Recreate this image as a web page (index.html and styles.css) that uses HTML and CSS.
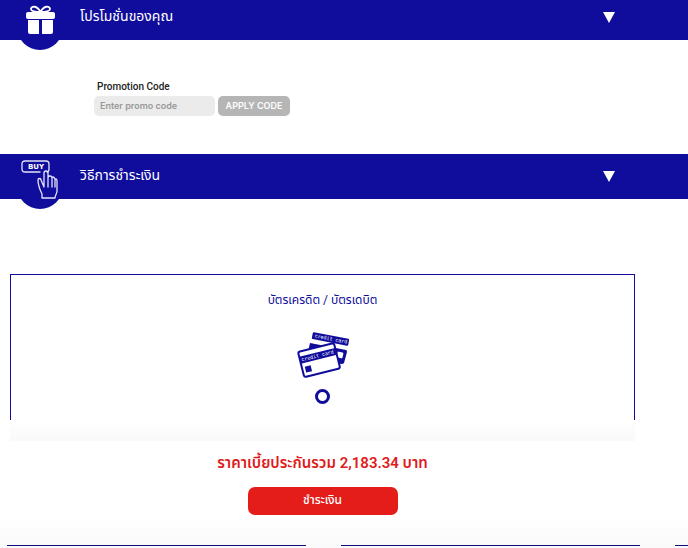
FILE: index.html
```html
<!DOCTYPE html>
<html lang="th">
<head>
  <meta charset="UTF-8">
  <meta name="viewport" content="width=device-width, initial-scale=1.0">
  <title>ชำระเงิน</title>
  <link rel="stylesheet" href="styles.css">
</head>
<body>
  <header class="bar bar-promo">
    <span class="bar-icon">
      <svg width="40" height="46" viewBox="0 0 40 46" fill="#fff">
        <path d="M8 8h25q2 0 2 2v3q0 2-2 2H8q-2 0-2-2v-3q0-2 2-2z"/>
        <path d="M8 16h11v14h-9q-2 0-2-2zM22 16h11v12q0 2-2 2h-9z"/>
        <path d="M20.500 8C17 1 11 2 11 5c0 2 3 3 9.500 3S30 7 30 5c0-3-6-4-9.500 3z" fill="none" stroke="#fff" stroke-width="1.800"/>
      </svg>
    </span>
    <h2>โปรโมชั่นของคุณ</h2>
    <button class="toggle" type="button" aria-label="โปรโมชั่นของคุณ"></button>
  </header>

  <form class="promo">
    <label for="promo">Promotion Code</label>
    <div class="promo-row">
      <input type="text" id="promo" placeholder="Enter promo code">
      <button class="apply" type="button">APPLY CODE</button>
    </div>
  </form>

  <header class="bar bar-pay">
    <span class="bar-icon">
      <svg width="40" height="46" viewBox="0 0 40 46" fill="none" stroke="#e4e4fa" stroke-width="1.300" stroke-linejoin="round" stroke-linecap="round">
        <path d="M20 13H5q-3 0-3-3V5q0-3 3-3h21q3 0 3 3v5q0 3-2 3"/>
        <text class="buy" x="16" y="10" text-anchor="middle">BUY</text>
        <path d="M22 39v-4c-2-4-4-8-4-14 0-2 3-2 3 0l3 7V14q0-2 2-2t2 2v14-9q0-2 2-2t2 2v9-8q0-2 1-2t2 2v8-6q0-2 1-2t1 2v10c0 3-2 4-2 7z"/>
      </svg>
    </span>
    <h2>วิธีการชำระเงิน</h2>
    <button class="toggle" type="button" aria-label="วิธีการชำระเงิน"></button>
  </header>

  <main class="payment">
    <div class="method">
      <label for="card">บัตรเครดิต / บัตรเดบิต</label>
      <svg width="54" height="48" viewBox="0 0 54 48">
        <g transform="translate(17 1) rotate(11)">
          <rect width="37" height="7" rx="1" fill="#100d9c"/>
          <text class="card-text" x="19" y="5" text-anchor="middle">credit card</text>
        </g>
        <path d="M14 12l36 7q1 0 1 2l-3 11q-1 1-2 1l-8-1-4-16-22 5z" fill="#100d9c"/>
        <rect x="41" y="21" width="6" height="6" rx="1" fill="#fff" transform="rotate(12 44 24)"/>
        <g transform="translate(2 21) rotate(-14)">
          <rect width="37" height="26" rx="2" fill="#fff" stroke="#100d9c" stroke-width="2"/>
          <rect y="5" width="37" height="7" fill="#100d9c"/>
          <text class="card-text" x="18" y="10" text-anchor="middle">credit card</text>
          <rect x="3" y="16" width="6" height="6" fill="#100d9c"/>
        </g>
      </svg>
      <input type="radio" id="card" name="method">
    </div>
    <div class="method-end"></div>
    <p class="total">ราคาเบี้ยประกันรวม 2,183.34 บาท</p>
    <button class="pay" type="button">ชำระเงิน</button>
  </main>

  <div class="plans">
    <div class="plan"></div>
    <div class="plan"></div>
    <div class="plan"></div>
  </div>
</body>
</html>
```
FILE: styles.css
```css
* {
  box-sizing: border-box;
}
body {
  margin: 0;
  background: #fff;
  font-family: Roboto, "Noto Sans Thai", "Noto Sans", sans-serif;
  overflow-x: hidden;
}
.bar {
  display: flex;
  align-items: flex-start;
  height: 45px;
  padding: 0 73px 0 17px;
  background: #100d9c;
  color: #fff;
}
.bar-promo {
  height: 40px;
}
.bar-icon {
  width: 46px;
  height: 46px;
  border-radius: 50%;
  background: #100d9c;
  margin-top: 4px;
}
.bar-pay .bar-icon {
  margin-top: 9px;
}
.bar-icon svg {
  display: block;
  margin: 0 auto;
}
.bar-pay svg {
  margin-top: -4px;
}
.buy {
  font: bold 7px "DejaVu Sans", sans-serif;
  fill: #fff;
  stroke: none;
}
.bar h2 {
  flex: 1;
  margin: 4px 0 0 17px;
  font-size: 14px;
  font-weight: 400;
  line-height: 24px;
}
.bar-pay h2 {
  margin-top: 9px;
}
.toggle {
  width: 12px;
  height: 11px;
  margin-top: 12px;
  padding: 0;
  border: 0;
  background: #fff;
  clip-path: polygon(0 0, 100% 0, 50% 100%);
}
.bar-pay .toggle {
  margin-top: 17px;
}
.promo {
  padding: 40px 94px 38px;
}
.promo label {
  display: block;
  padding-left: 3px;
  font-size: 10px;
  font-weight: 500;
  line-height: 14px;
  color: #222;
  margin-bottom: 2px;
}
.promo-row {
  display: flex;
  gap: 3px;
}
.promo input,
.apply {
  height: 20px;
  border: 0;
  border-radius: 5px;
  font-family: Inter, sans-serif;
  font-size: 9px;
  font-weight: 600;
}
.promo input {
  width: 121px;
  padding: 0 6px 2px;
  background: #ebebeb;
}
.promo input::placeholder {
  color: #999;
}
.apply {
  width: 72px;
  padding: 0 0 2px;
  background: #b5b5b5;
  color: #fff;
}
.payment {
  margin: 75px 53px 0 10px;
  text-align: center;
}
.method {
  display: flex;
  flex-direction: column;
  align-items: center;
  height: 146px;
  padding-top: 15px;
  border: 1px solid #100d9c;
  border-bottom: 0;
}
.method label {
  font-size: 12px;
  line-height: 20px;
  color: #100d9c;
}
.method svg {
  margin-top: 21px;
}
.card-text {
  font: 5px "DejaVu Sans Mono", monospace;
  fill: #fff;
}
.method input {
  appearance: none;
  width: 15px;
  height: 15px;
  margin: 10px 0 0;
  border: 3px solid #100d9c;
  border-radius: 50%;
  flex-shrink: 0;
}
.method-end {
  height: 21px;
  background: linear-gradient(#fff, #f9f9f9);
}
.total {
  margin: 10px 0 12px;
  font-size: 15px;
  font-weight: 600;
  line-height: 24px;
  color: #e01b1b;
}
.pay {
  width: 150px;
  height: 28px;
  padding: 0 0 2px;
  border: 0;
  border-radius: 7px;
  background: #e41d1a;
  color: #fff;
  font-family: inherit;
  font-size: 12px;
  font-weight: 500;
}
.plans {
  display: grid;
  grid-template-columns: repeat(3, 299px);
  gap: 35px;
  padding: 30px 0 0 7px;
  overflow: hidden;
  background: linear-gradient(#fff, #fafafa);
}
.plan {
  height: 3px;
  border-top: 1px solid #100d7c;
}
```
